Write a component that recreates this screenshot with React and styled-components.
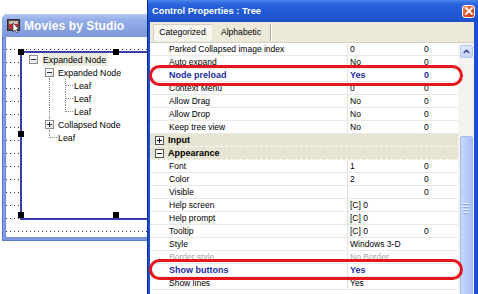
import React from "react";
import styled, { createGlobalStyle } from "styled-components";

const Global = createGlobalStyle`
  html, body { margin: 0; padding: 0; background: #fff; }
  body { font-family: "Liberation Sans", Arial, sans-serif; }
  * { box-sizing: border-box; }
`;

const Desktop = styled.div`
  position: relative;
  width: 478px;
  height: 294px;
  overflow: hidden;
  background: #fff;
`;

/* ---------- left designer window ---------- */
const LeftWindow = styled.div`
  position: absolute;
  left: 2px;
  top: 14px;
  width: 230px;
  height: 227px;
  display: flex;
  flex-direction: column;
  background: #7f9be0;
  border-radius: 6px 6px 0 0;
  box-shadow: inset 0 0 0 1px #5a7bcf;
`;

const LeftTitle = styled.div`
  height: 23px;
  flex: none;
  display: flex;
  align-items: center;
  gap: 3px;
  padding-left: 5px;
  border-radius: 6px 6px 0 0;
  background: linear-gradient(180deg, #b2c5f2 0%, #97afe8 25%, #869fe0 70%, #7e98dc 100%);
  color: #fff;
  font: bold 12px "Liberation Sans", Arial, sans-serif;
  letter-spacing: 0.1px;
`;

const LeftClient = styled.div`
  position: relative;
  flex: 1;
  margin: 0 3px 3px;
  background-color: #fff;
  background-image:
    linear-gradient(90deg, transparent 1px, #fff 1px),
    linear-gradient(180deg, #3a3a3a 1px, #fff 1px);
  background-size: 4px 13px, 4px 13px;
  background-position: 0 12px, 0 12px;
  border: 1px solid #6f8bd2;
  border-top: none;
`;

const TreeFrame = styled.div`
  position: absolute;
  left: 14px;
  top: 14px;
  width: 196px;
  height: 169px;
  border: 2px solid #3b3fa8;
  background: #fff;
  padding-left: 7px;
  font: 8.8px "Liberation Sans", Arial, sans-serif;
  color: #000;
`;

const Handle = styled.span`
  position: absolute;
  width: 6px;
  height: 6px;
  background: #000;
  left: ${(p) => `calc(${p.$x * 100}% + ${-1 - 2 * p.$x - 3}px)`};
  top: ${(p) => `calc(${p.$y * 100}% + ${-1 - 2 * p.$y - 3}px)`};
`;

const TreeRow = styled.div`
  display: flex;
  height: 13px;
  align-items: stretch;
`;

const IndentCell = styled.span`
  position: relative;
  flex: none;
  width: 16px;
  ${(p) =>
    p.$line &&
    `&::before{content:"";position:absolute;left:4px;top:0;bottom:0;border-left:1px dotted #8a8a8a;}`}
`;

const NodeCell = styled.span`
  position: relative;
  flex: none;
  width: 12px;
  &::before {
    content: "";
    position: absolute;
    left: 4px;
    top: ${(p) => (p.$up ? "0" : "6px")};
    height: ${(p) => (p.$up && p.$down ? "13px" : p.$up || p.$down ? "7px" : "0")};
    border-left: ${(p) => (p.$up || p.$down ? "1px dotted #8a8a8a" : "none")};
  }
  &::after {
    content: "";
    position: absolute;
    left: 5px;
    top: 6px;
    width: ${(p) => (p.$leaf ? "7px" : "0")};
    border-top: ${(p) => (p.$leaf ? "1px dotted #8a8a8a" : "none")};
  }
`;

const ExpandBox = styled.span`
  position: absolute;
  z-index: 1;
  left: 0;
  top: 2px;
  width: 9px;
  height: 9px;
  border: 1px solid #8d8d8d;
  background: linear-gradient(135deg, #fff 40%, #dedbd0 100%);
  &::before {
    content: "";
    position: absolute;
    left: 1px;
    top: 3px;
    width: 5px;
    height: 1px;
    background: #2b2b2b;
  }
  &::after {
    content: "";
    position: absolute;
    left: 3px;
    top: 1px;
    width: 1px;
    height: 5px;
    background: ${(p) => (p.$plus ? "#2b2b2b" : "transparent")};
  }
`;

const TreeLabel = styled.span`
  display: flex;
  align-items: center;
  padding: 0 2px 0 1px;
  margin-left: ${(p) => (p.$root ? "1px" : "0")};
  white-space: nowrap;
  background: ${(p) => (p.$selected ? "#ecebe0" : "transparent")};
`;

/* ---------- right properties window ---------- */
const RightWindow = styled.div`
  position: absolute;
  z-index: 2;
  left: 147px;
  top: 0;
  width: 331px;
  height: 310px;
  display: flex;
  flex-direction: column;
  background: #1b4fcf;
  border-left: 1px solid #0c2f96;
`;

const RightTitle = styled.div`
  height: 22px;
  flex: none;
  display: flex;
  align-items: center;
  justify-content: space-between;
  padding: 0 3px 0 4px;
  background: linear-gradient(180deg, #4c86ee 0%, #2a63dc 18%, #215ad6 55%, #1d51cc 100%);
  color: #fff;
  font: bold 9.3px "Liberation Sans", Arial, sans-serif;
`;

const CloseButton = styled.span`
  width: 13px;
  height: 13px;
  border: 1px solid #fff;
  border-radius: 3px;
  background: linear-gradient(135deg, #f0906c 0%, #e0562e 45%, #c43c14 100%);
  display: flex;
  align-items: center;
  justify-content: center;
`;

const Frame = styled.div`
  flex: 1;
  display: flex;
  flex-direction: column;
  margin: 0 4px 0 2px;
  background: #fff;
  font: 8.5px "Liberation Sans", Arial, sans-serif;
  color: #000;
`;

const Toolbar = styled.div`
  height: 21px;
  flex: none;
  display: flex;
  align-items: center;
  padding-left: 3px;
  background: #ece9d8;
  border-bottom: 1px solid #d6d2c2;
`;

const Tab = styled.span`
  height: 17px;
  width: ${(p) => p.$w}px;
  display: flex;
  align-items: center;
  justify-content: center;
  font-size: 8.6px;
  background: ${(p) => (p.$active ? "#f6f5f0" : "transparent")};
  border: 1px solid ${(p) => (p.$active ? "#a19d8c #fff #fff #a19d8c" : "transparent")};
  box-shadow: ${(p) => (p.$active ? "inset 1px 1px 0 #d4d0c2" : "none")};
`;

const ToolSep = styled.span`
  width: 2px;
  height: 17px;
  border-left: 1px solid #aca899;
  border-right: 1px solid #fff;
`;

const Grid = styled.div`
  flex: 1;
  display: flex;
  min-height: 0;
`;

const GridBody = styled.div`
  width: 308px;
  flex: none;
  display: flex;
  flex-direction: column;
`;

const Row = styled.div`
  display: flex;
  height: 13px;
  flex: none;
  align-items: stretch;
  background: ${(p) => (p.$section ? "#e6e4d3" : "#fff")};
  border-bottom: 1px ${(p) => (p.$section ? "dashed #fbfaf4" : "solid #e9e9e9")};
  color: ${(p) => (p.$hl ? "#1d2d9e" : p.$dim ? "#a6a6a6" : "#000")};
  font-weight: ${(p) => (p.$hl || p.$section ? "bold" : "normal")};
  font-size: ${(p) => (p.$hl || p.$section ? "9px" : "8.5px")};
`;

const Gutter = styled.span`
  width: 18px;
  flex: none;
  display: flex;
  align-items: center;
  padding-left: 5px;
`;

const SectionBox = styled.span`
  position: relative;
  width: 9px;
  height: 9px;
  border: 1px solid #555;
  background: #fff;
  &::before {
    content: "";
    position: absolute;
    left: 1px;
    top: 3px;
    width: 5px;
    height: 1px;
    background: #000;
  }
  &::after {
    content: "";
    position: absolute;
    left: 3px;
    top: 1px;
    width: 1px;
    height: 5px;
    background: ${(p) => (p.$plus ? "#000" : "transparent")};
  }
`;

const Cell = styled.span`
  width: ${(p) => p.$w}px;
  flex: none;
  display: flex;
  align-items: center;
  padding-left: ${(p) => p.$pad}px;
  white-space: nowrap;
  overflow: hidden;
  border-left: ${(p) => (p.$divider ? "1px solid #e2e2e2" : "none")};
`;

const Scrollbar = styled.div`
  width: 16px;
  flex: none;
  display: flex;
  flex-direction: column;
  align-items: center;
  background: #f4f3ef;
  padding-top: 2px;
`;

const ScrollUp = styled.span`
  width: 13px;
  height: 13px;
  border-radius: 2px;
  border: 1px solid #b5c8f4;
  background: linear-gradient(180deg, #dfe8fd 0%, #c4d4fb 100%);
  display: flex;
  align-items: center;
  justify-content: center;
`;

const Thumb = styled.span`
  margin-top: 78px;
  width: 13px;
  flex: 1;
  border-radius: 2px;
  border: 1px solid #a3b9ee;
  background: linear-gradient(90deg, #c9d9fd 0%, #b6cbf9 50%, #a9c0f4 100%);
  display: flex;
  flex-direction: column;
  align-items: center;
  padding-top: 66px;
  gap: 1px;
`;

const Grip = styled.span`
  width: 6px;
  height: 1px;
  background: #eef3ff;
  box-shadow: 0 1px 0 #8ca6e0;
  margin-bottom: 1px;
`;

const Highlight = styled.div`
  position: absolute;
  z-index: 3;
  left: 149px;
  top: ${(p) => p.$top}px;
  width: 314px;
  height: 21px;
  border: 3px solid #e5161e;
  border-radius: 11px;
`;

/* ---------- data ---------- */
const tree = [
  { level: 0, label: "Expanded Node", box: "minus", selected: true },
  { level: 1, label: "Expanded Node", box: "minus", down: true },
  { level: 2, label: "Leaf", lines: [false, true], up: true, down: true },
  { level: 2, label: "Leaf", lines: [false, true], up: true, down: true },
  { level: 2, label: "Leaf", lines: [false, true], up: true },
  { level: 1, label: "Collapsed Node", box: "plus", lines: [false], up: true, down: true },
  { level: 1, label: "Leaf", lines: [false], up: true },
];

const props = [
  { name: "Parked Collapsed image index", v: "0", d: "0" },
  { name: "Auto expand", v: "No", d: "0" },
  { name: "Node preload", v: "Yes", d: "0", hl: true },
  { name: "Context Menu", v: "0", d: "0" },
  { name: "Allow Drag", v: "No", d: "0" },
  { name: "Allow Drop", v: "No", d: "0" },
  { name: "Keep tree view", v: "No", d: "0" },
  { section: "Input", plus: true },
  { section: "Appearance" },
  { name: "Font", v: "1", d: "0" },
  { name: "Color", v: "2", d: "0" },
  { name: "Visible", v: "", d: "0" },
  { name: "Help screen", v: "[C] 0", d: "" },
  { name: "Help prompt", v: "[C] 0", d: "" },
  { name: "Tooltip", v: "[C] 0", d: "0" },
  { name: "Style", v: "Windows 3-D", d: "" },
  { name: "Border style", v: "No Border", d: "", dim: true },
  { name: "Show buttons", v: "Yes", d: "", hl: true },
  { name: "Show lines", v: "Yes", d: "" },
];

const handles = [
  [0, 0], [0.5, 0], [1, 0],
  [0, 0.5], [1, 0.5],
  [0, 1], [0.5, 1], [1, 1],
];

function AppIcon() {
  return (
    <svg width="14" height="14" viewBox="0 0 14 14">
      <rect x="0.5" y="0.5" width="12" height="11" fill="#5a4a4a" stroke="#2a2a3a" />
      <rect x="2" y="2" width="9" height="8" fill="#c9b9b0" />
      <rect x="2" y="5" width="9" height="5" fill="#b8323a" />
      <path d="M6 4 L6 13 L8 11 L9.6 14 L11 13.3 L9.5 10.4 L12 10.2 Z" fill="#fff" stroke="#222" strokeWidth="0.6" />
    </svg>
  );
}

export default function App() {
  return (
    <Desktop>
      <Global />
      <LeftWindow>
        <LeftTitle>
          <AppIcon />
          <span>Movies by Studio</span>
        </LeftTitle>
        <LeftClient>
          <TreeFrame>
            {handles.map(([x, y], i) => (
              <Handle key={i} $x={x} $y={y} />
            ))}
            {tree.map((n, i) => (
              <TreeRow key={i}>
                {Array.from({ length: n.level }).map((_, j) => (
                  <IndentCell key={j} $line={n.lines ? n.lines[j] : false} />
                ))}
                <NodeCell $up={n.up} $down={n.down} $leaf={!n.box}>
                  {n.box && <ExpandBox $plus={n.box === "plus"} />}
                </NodeCell>
                <TreeLabel $selected={n.selected} $root={n.level === 0}>
                  {n.label}
                </TreeLabel>
              </TreeRow>
            ))}
          </TreeFrame>
        </LeftClient>
      </LeftWindow>

      <RightWindow>
        <RightTitle>
          <span>Control Properties : Tree</span>
          <CloseButton>
            <svg width="8" height="8" viewBox="0 0 8 8">
              <path d="M1 1 L7 7 M7 1 L1 7" stroke="#fff" strokeWidth="1.8" strokeLinecap="square" />
            </svg>
          </CloseButton>
        </RightTitle>
        <Frame>
          <Toolbar>
            <Tab $active $w={59}>Categorized</Tab>
            <Tab $w={58}>Alphabetic</Tab>
            <ToolSep />
          </Toolbar>
          <Grid>
            <GridBody>
              {props.map((p, i) =>
                p.section ? (
                  <Row key={i} $section>
                    <Gutter>
                      <SectionBox $plus={p.plus} />
                    </Gutter>
                    <Cell $w={290} $pad={0}>{p.section}</Cell>
                  </Row>
                ) : (
                  <Row key={i} $hl={p.hl} $dim={p.dim}>
                    <Gutter />
                    <Cell $w={179} $pad={1}>{p.name}</Cell>
                    <Cell $w={71} $pad={2} $divider>{p.v}</Cell>
                    <Cell $w={40} $pad={6}>{p.d}</Cell>
                  </Row>
                )
              )}
            </GridBody>
            <Scrollbar>
              <ScrollUp>
                <svg width="7" height="5" viewBox="0 0 7 5">
                  <path d="M0.8 4 L3.5 1.3 L6.2 4" fill="none" stroke="#2a3f8f" strokeWidth="1.4" />
                </svg>
              </ScrollUp>
              <Thumb>
                <Grip />
                <Grip />
                <Grip />
                <Grip />
              </Thumb>
            </Scrollbar>
          </Grid>
        </Frame>
      </RightWindow>

      <Highlight $top={65} />
      <Highlight $top={259} />
    </Desktop>
  );
}
